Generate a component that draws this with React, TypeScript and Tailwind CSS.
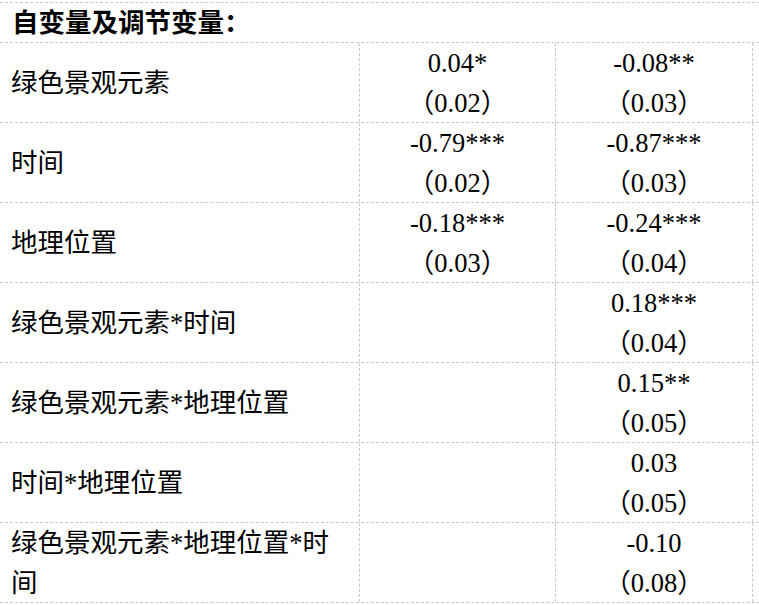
const rows: { label: string; a?: [string, string]; b: [string, string] }[] = [
  { label: "绿色景观元素", a: ["0.04*", "（0.02）"], b: ["-0.08**", "（0.03）"] },
  { label: "时间", a: ["-0.79***", "（0.02）"], b: ["-0.87***", "（0.03）"] },
  { label: "地理位置", a: ["-0.18***", "（0.03）"], b: ["-0.24***", "（0.04）"] },
  { label: "绿色景观元素*时间", b: ["0.18***", "（0.04）"] },
  { label: "绿色景观元素*地理位置", b: ["0.15**", "（0.05）"] },
  { label: "时间*地理位置", b: ["0.03", "（0.05）"] },
  { label: "绿色景观元素*地理位置*时间", b: ["-0.10", "（0.08）"] },
];

function Value({ v }: { v?: [string, string] }) {
  if (!v) return null;
  return (
    <div className="flex flex-col items-center">
      <span>{v[0]}</span>
      <span>{v[1]}</span>
    </div>
  );
}

export default function App() {
  return (
    <div
      className="min-h-screen w-[759px] overflow-hidden bg-white pt-[2px] text-[26.5px] leading-[40px] text-black"
      style={{ fontFamily: '"Liberation Serif", "Noto Sans CJK SC", serif' }}
    >
      <div className="flex h-[41px] w-[800px] items-center border-y border-dashed border-[#c8c8c8] pl-[12px] font-bold">
        自变量及调节变量：
      </div>
      {rows.map((r) => (
        <div key={r.label} className="flex h-[80px] w-[800px] border-b border-dashed border-[#c8c8c8]">
          <div className="flex w-[360px] shrink-0 items-center border-r border-dashed border-[#c8c8c8] pl-[11px] pr-[12px]">
            {r.label}
          </div>
          <div className="flex w-[196px] shrink-0 items-center justify-center border-r border-dashed border-[#c8c8c8]">
            <Value v={r.a} />
          </div>
          <div className="flex w-[197px] shrink-0 items-center justify-center border-r border-dashed border-[#c8c8c8]">
            <Value v={r.b} />
          </div>
          <div className="flex-1" />
        </div>
      ))}
    </div>
  );
}
